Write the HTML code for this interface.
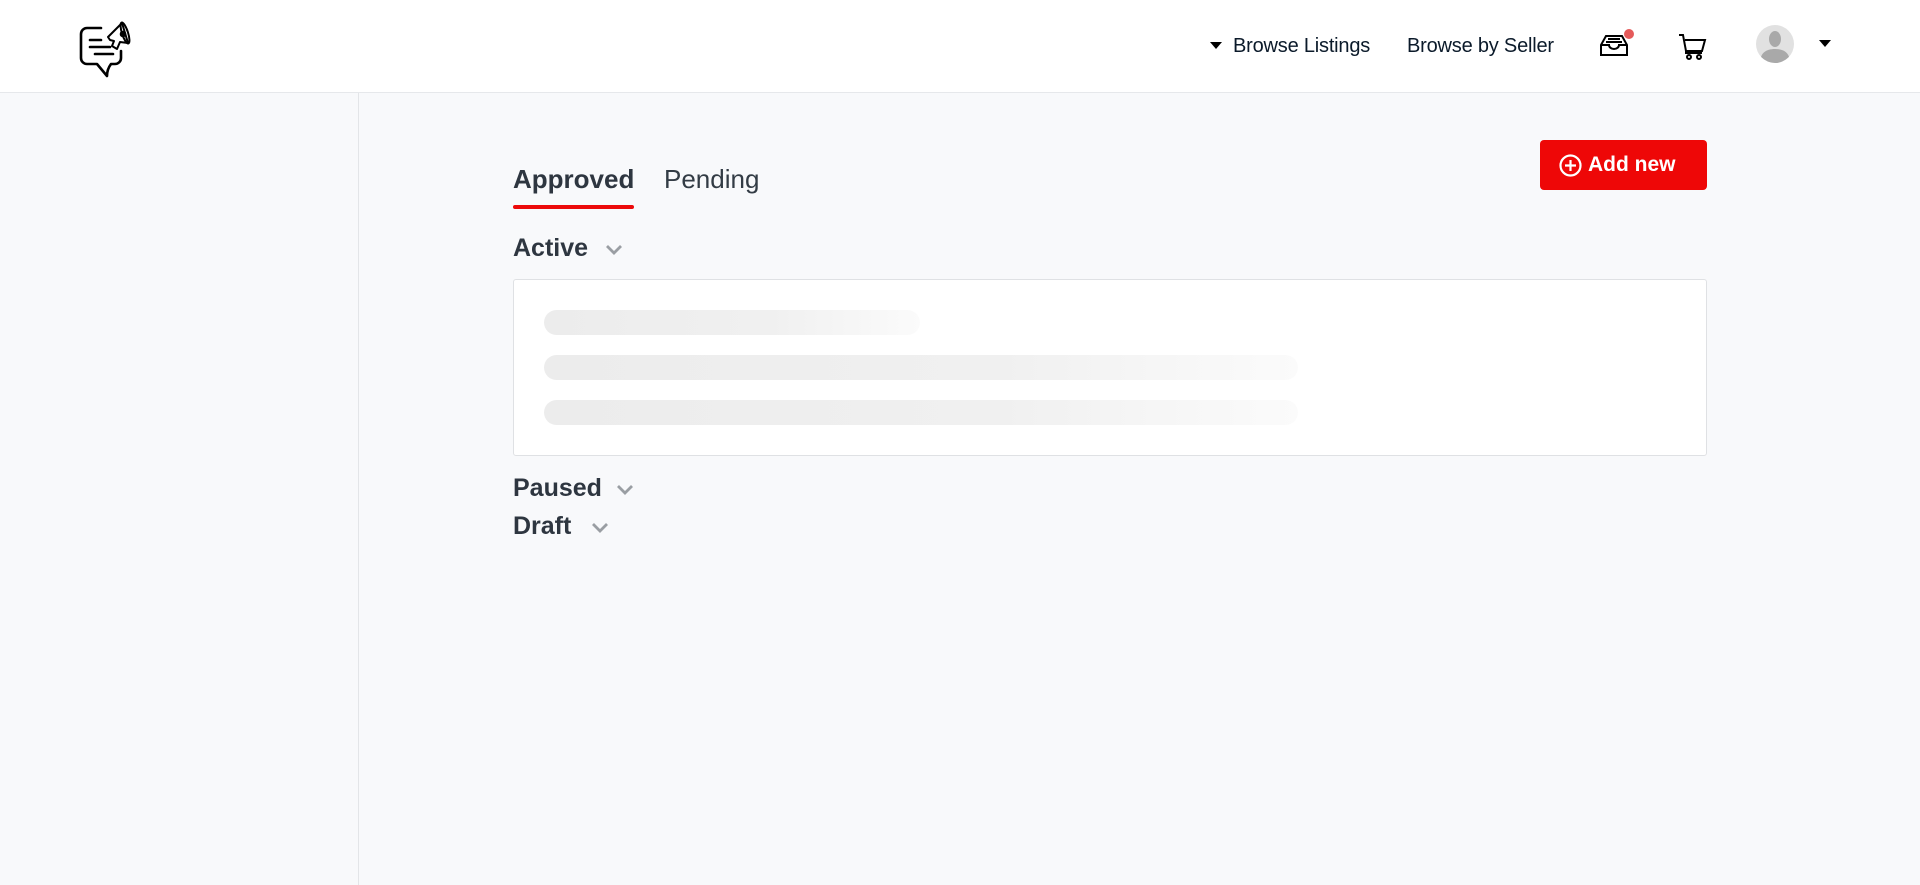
<!DOCTYPE html>
<html><head><meta charset="utf-8"><style>
*{margin:0;padding:0;box-sizing:border-box}
body{width:1920px;height:885px;overflow:hidden;background:#f8f9fb;font-family:"Liberation Sans",sans-serif;color:#2e3640;position:relative}
.hdr{position:absolute;left:0;top:0;width:1920px;height:93px;background:#fff;border-bottom:1px solid #e6e8eb}
.side{position:absolute;left:0;top:93px;width:359px;height:792px;background:#f8f9fb;border-right:1px solid #e3e5e8}
.nav{position:absolute;top:35px;font-size:20px;color:#0b1a2a;letter-spacing:-0.2px}
.abs{position:absolute}
.tab{position:absolute;font-size:26px}
.h{position:absolute;font-size:25px;font-weight:bold;color:#2e3640}
.chev{position:absolute;width:18px;height:11px}
.bar{position:absolute;height:25px;border-radius:13px;background:linear-gradient(90deg,#ececec,#f0f0f0 60%,#fbfbfb)}
</style></head><body>
<div class="hdr"></div>
<svg class="abs" style="left:78px;top:14px" width="60" height="66" viewBox="0 0 60 66" fill="none" stroke="#000" stroke-width="2.6" stroke-linecap="round" stroke-linejoin="round">
<path d="M23 14H9a6 6 0 0 0-6 6v24a6 6 0 0 0 6 6h10l10 12c0-4 1-8 4-12h4a6 6 0 0 0 6-6V37"/>
<path d="M12 26h11M12 33h20M17 40h18"/>
<path d="M30 23l4-4 10-10 6 20-8-1-3 7-5-3 2-5-4-1z" stroke-width="2"/>
<ellipse cx="47" cy="19" rx="3" ry="11" transform="rotate(-18 47 19)" stroke-width="2"/>
<circle cx="45" cy="20" r="2" fill="#000"/>
</svg>
<svg class="abs" style="left:1210px;top:42px" width="12" height="8"><path d="M0 0h12L6 7z" fill="#000"/></svg>
<div class="nav" style="left:1233px">Browse Listings</div>
<div class="nav" style="left:1407px">Browse by Seller</div>
<svg class="abs" style="left:1598px;top:30px" width="34" height="30" viewBox="0 0 34 30" fill="none" stroke="#000" stroke-width="2">
<path d="M3 15l5-9h16l5 9v10H3z"/><path d="M3 15h8a5 4 0 0 0 10 0h8"/><path d="M8 12h16M10 9h12"/>
</svg>
<div class="abs" style="left:1624px;top:29px;width:10px;height:10px;border-radius:50%;background:#e55a5a"></div>
<svg class="abs" style="left:1678px;top:33px" width="30" height="28" viewBox="0 0 30 28" fill="none" stroke="#000" stroke-width="2">
<path d="M1 2h4l3 16h16l3-11H7"/><path d="M8 18v2h16"/><circle cx="11" cy="24" r="2"/><circle cx="21" cy="24" r="2"/>
</svg>
<svg class="abs" style="left:1756px;top:25px" width="38" height="38" viewBox="0 0 38 38"><circle cx="19" cy="19" r="19" fill="#e1e1e1"/><clipPath id="c"><circle cx="19" cy="19" r="19"/></clipPath><g clip-path="url(#c)" fill="#a9a9a9"><ellipse cx="19" cy="14" rx="6" ry="8"/><path d="M4 38c0-10 6-14 15-14s15 4 15 14z"/></g></svg>
<svg class="abs" style="left:1819px;top:40px" width="12" height="8"><path d="M0 0h12L6 7z" fill="#000"/></svg>
<div class="side"></div>
<div class="tab" style="left:513px;top:164px;font-weight:bold">Approved</div>
<div class="abs" style="left:513px;top:205px;width:121px;height:4px;border-radius:2px;background:#ec0a0a"></div>
<div class="tab" style="left:664px;top:164px;color:#333c45">Pending</div>
<div class="abs" style="left:1540px;top:140px;width:167px;height:50px;background:#ee0707;border-radius:4px;color:#fff;font-weight:bold;font-size:21px;line-height:50px;padding-left:48px">Add new</div>
<svg class="abs" style="left:1559px;top:154px" width="23" height="23" viewBox="0 0 23 23" fill="none" stroke="#fff" stroke-width="2.2"><circle cx="11.5" cy="11.5" r="10"/><path d="M11.5 6v11M6 11.5h11"/></svg>
<div class="h" style="left:513px;top:234px">Active</div>
<svg class="chev" style="left:605px;top:244px" viewBox="0 0 18 11"><path d="M2 2l7 7 7-7" fill="none" stroke="#9a9ea3" stroke-width="2.8"/></svg>
<div class="abs" style="left:513px;top:279px;width:1194px;height:177px;background:#fff;border:1px solid #dfe1e4;border-radius:3px"></div>
<div class="bar" style="left:544px;top:310px;width:376px"></div>
<div class="bar" style="left:544px;top:355px;width:754px"></div>
<div class="bar" style="left:544px;top:400px;width:754px"></div>
<div class="h" style="left:513px;top:474px">Paused</div>
<svg class="chev" style="left:616px;top:484px" viewBox="0 0 18 11"><path d="M2 2l7 7 7-7" fill="none" stroke="#9a9ea3" stroke-width="2.8"/></svg>
<div class="h" style="left:513px;top:512px">Draft</div>
<svg class="chev" style="left:591px;top:522px" viewBox="0 0 18 11"><path d="M2 2l7 7 7-7" fill="none" stroke="#9a9ea3" stroke-width="2.8"/></svg>
</body></html>
